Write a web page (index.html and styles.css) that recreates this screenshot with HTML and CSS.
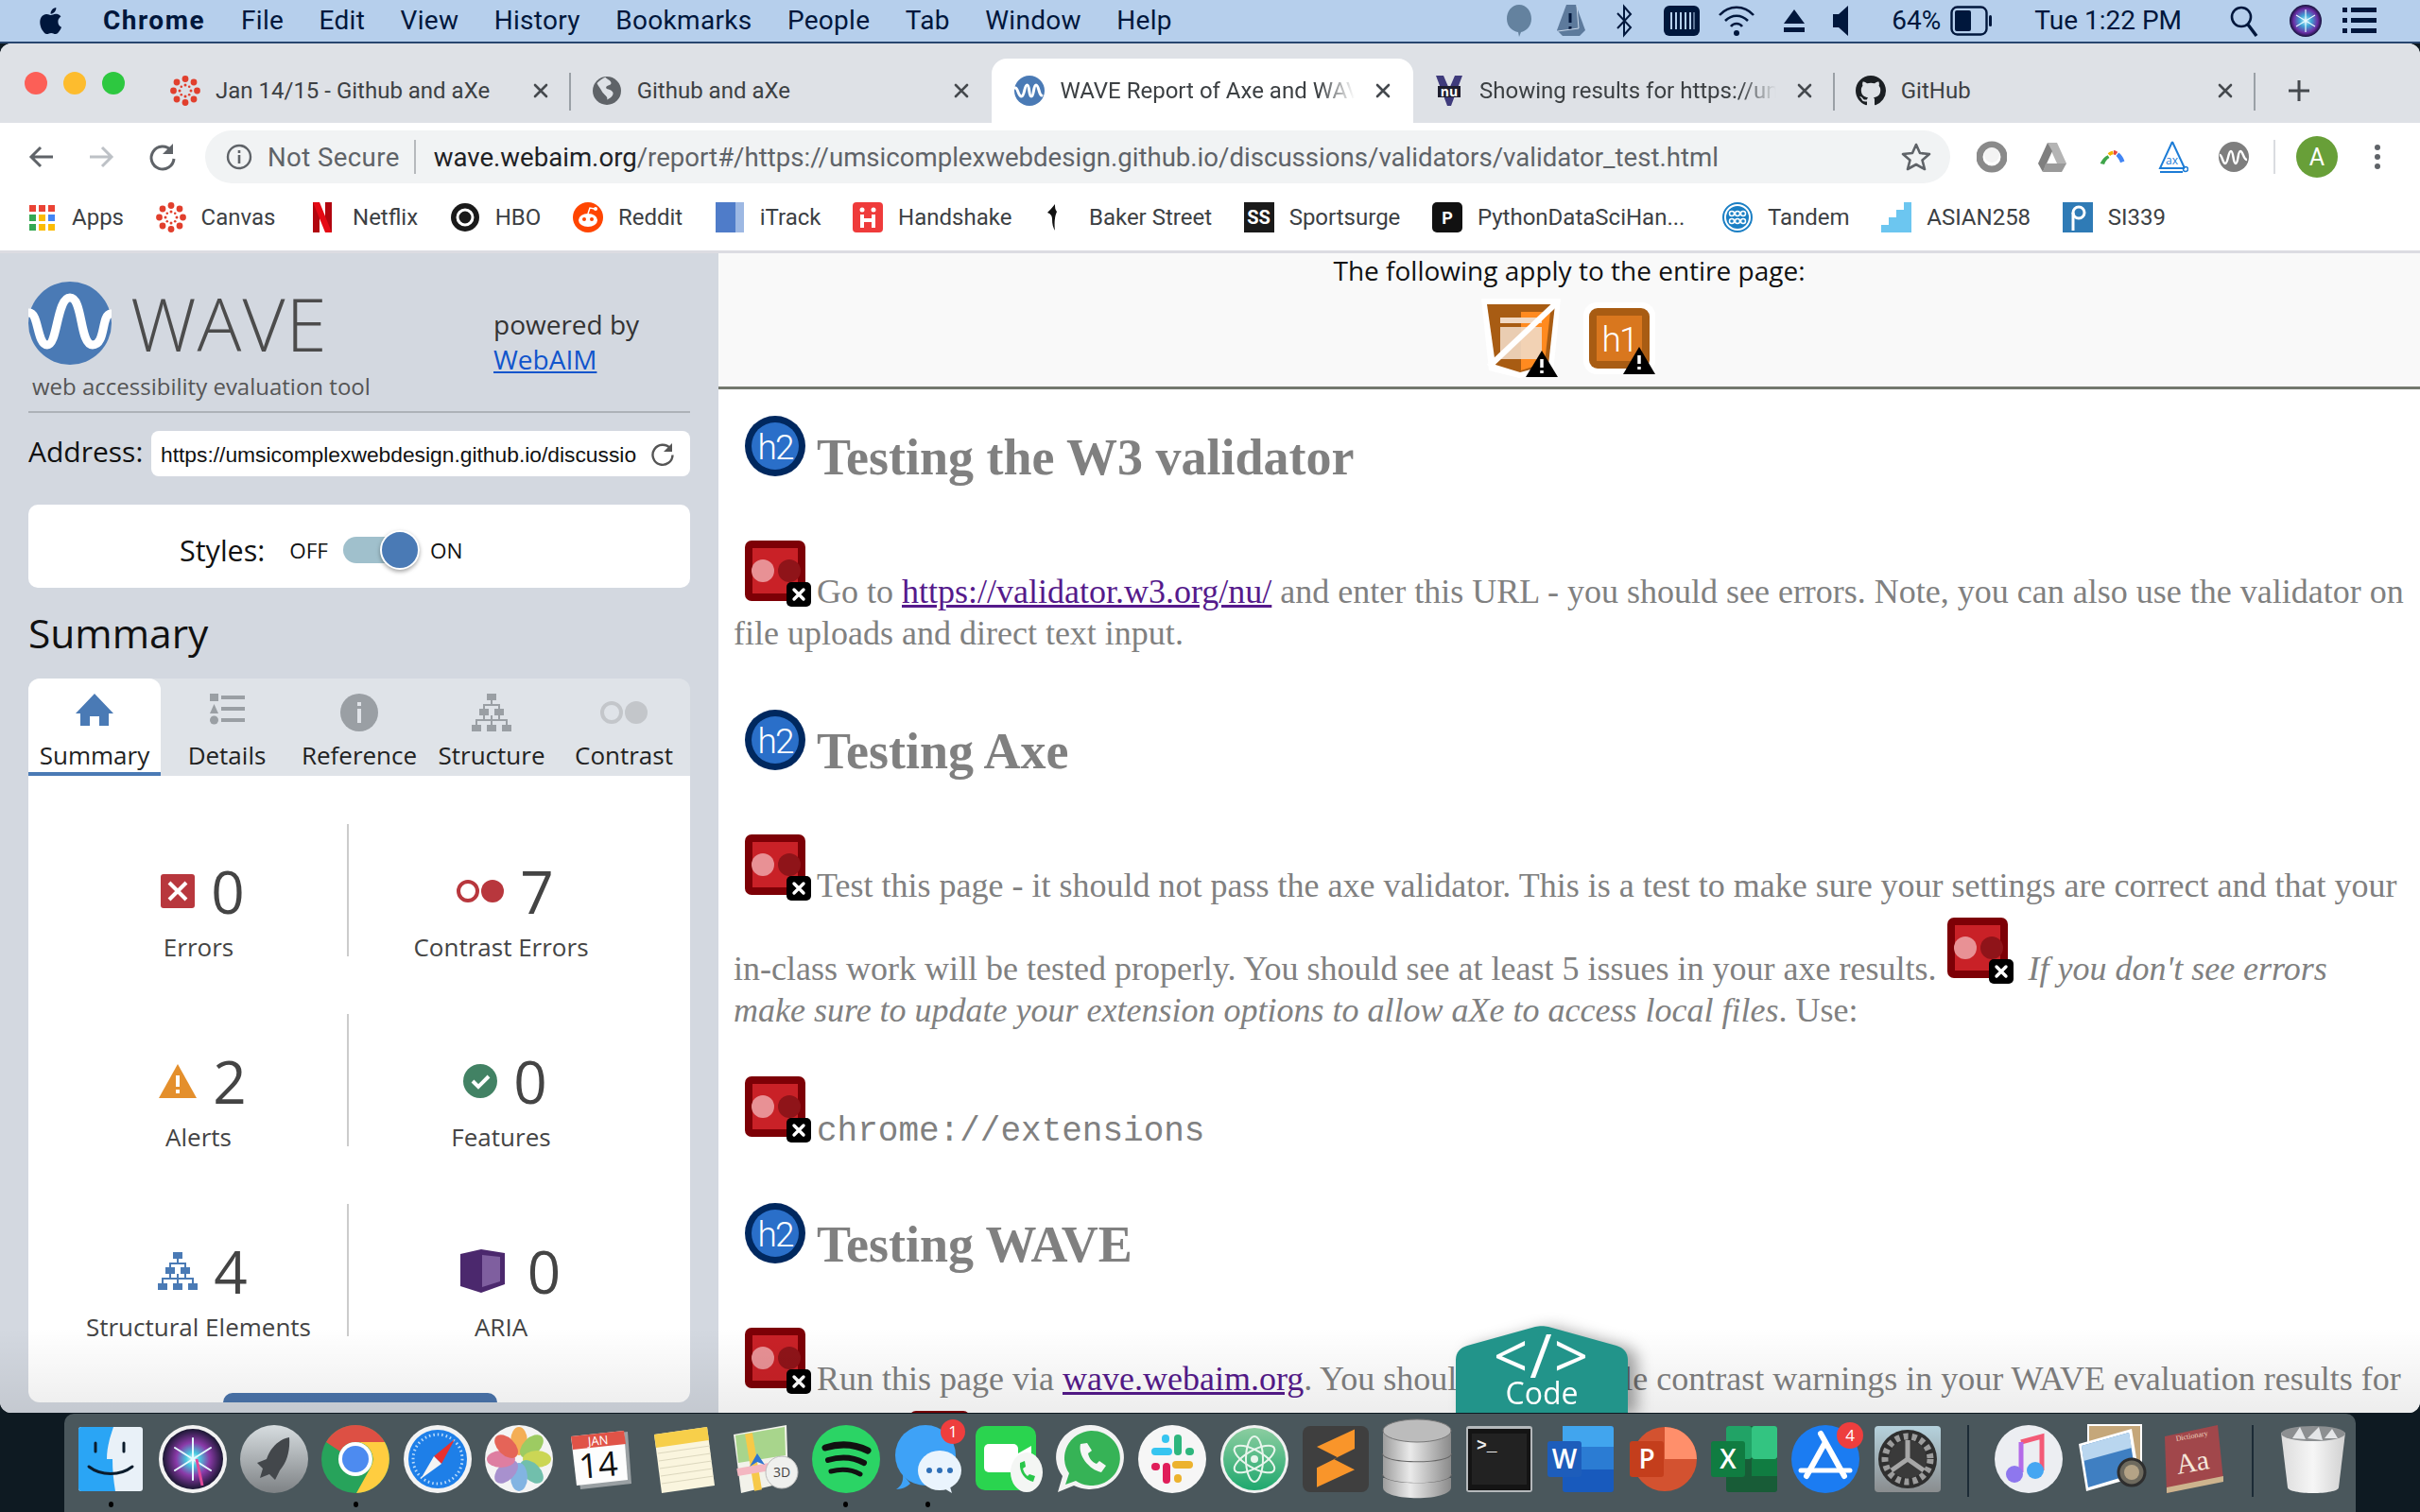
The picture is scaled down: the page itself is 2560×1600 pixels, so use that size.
FILE: index.html
```html
<!DOCTYPE html>
<html lang="en">
<head>
<meta charset="utf-8">
<title>WAVE Report of Axe and WAVE</title>
<link rel="stylesheet" href="styles.css">
</head>
<body>
<svg class="defs" aria-hidden="true">
  <symbol id="i-canvas" viewBox="0 0 32 32"><g fill="#e13f2d"><circle cx="16" cy="3.5" r="3.400"/><circle cx="16" cy="28.5" r="3.400"/><circle cx="3.5" cy="16" r="3.400"/><circle cx="28.500" cy="16" r="3.400"/><circle cx="7" cy="7" r="3.400"/><circle cx="25" cy="7" r="3.400"/><circle cx="7" cy="25" r="3.400"/><circle cx="25" cy="25" r="3.400"/><circle cx="16" cy="10" r="1.500"/><circle cx="16" cy="22" r="1.500"/><circle cx="10" cy="16" r="1.500"/><circle cx="22" cy="16" r="1.500"/><circle cx="11.800" cy="11.800" r="1.300"/><circle cx="20.200" cy="11.800" r="1.300"/><circle cx="11.800" cy="20.200" r="1.300"/><circle cx="20.200" cy="20.200" r="1.300"/></g></symbol>
  <symbol id="i-wave" viewBox="0 0 32 32"><circle cx="16" cy="16" r="16" fill="#4a7ab5"/><path d="M1 12c3 0 3 9 6.500 9s3-12 6-12 1.500 12 4.500 12 2-12 5-12 3 11 6 11" transform="translate(0 1)" fill="none" stroke="#fff" stroke-width="3" stroke-linecap="round"/></symbol>
  <symbol id="i-github" viewBox="0 0 16 16"><path fill="#1b1f23" d="M8 0C3.58 0 0 3.58 0 8c0 3.54 2.29 6.53 5.470 7.590.4.070.55-.17.55-.38 0-.19-.01-.82-.01-1.490-2.010.37-2.530-.49-2.690-.94-.09-.23-.48-.94-.82-1.130-.28-.15-.68-.52-.01-.53.63-.01 1.080.58 1.230.82.72 1.210 1.870.87 2.330.66.070-.52.28-.87.51-1.070-1.780-.2-3.640-.89-3.640-3.950 0-.87.31-1.590.82-2.150-.08-.2-.36-1.020.08-2.120 0 0 .67-.21 2.200.82.64-.18 1.320-.27 2-.27.68 0 1.360.09 2 .27 1.530-1.040 2.200-.82 2.200-.82.44 1.100.16 1.920.08 2.120.51.56.82 1.270.82 2.150 0 3.070-1.870 3.750-3.650 3.950.29.25.54.73.54 1.480 0 1.070-.01 1.930-.01 2.200 0 .21.15.46.55.38A8.013 8.013 0 0016 8c0-4.420-3.580-8-8-8z"/></symbol>
  <symbol id="i-contrast" viewBox="0 0 64 64"><rect width="64" height="64" rx="7" fill="#7d0006"/><rect x="8" y="8" width="48" height="48" fill="#c92127"/><ellipse cx="19" cy="32" rx="12" ry="12" fill="#e89195"/><ellipse cx="47" cy="32" rx="12" ry="12" fill="#8f1419"/></symbol>
  <symbol id="i-badge-x" viewBox="0 0 26 26"><rect width="26" height="26" rx="5" fill="#000"/><path d="M8 8l10 10M18 8L8 18" stroke="#fff" stroke-width="3.400" stroke-linecap="round"/></symbol>
  <symbol id="i-close" viewBox="0 0 20 20"><path d="M4 4l12 12M16 4L4 16" stroke="#45494e" stroke-width="2.600" stroke-linecap="round"/></symbol>
</svg>

<header class="menubar">
  <nav class="menu-left">
    <svg class="apple" viewBox="0 0 24 28"><path fill="#00173c" d="M17.500 14.800c0-3 2.500-4.500 2.600-4.600-1.400-2.100-3.600-2.400-4.400-2.400-1.900-.2-3.600 1.100-4.600 1.100-1 0-2.400-1.100-4-1-2 0-3.900 1.200-5 3-2.100 3.700-.5 9.200 1.500 12.200 1 1.500 2.200 3.100 3.800 3 1.500-.1 2.100-1 3.900-1 1.800 0 2.300 1 3.900 1 1.600 0 2.700-1.500 3.700-3 1.200-1.700 1.600-3.300 1.700-3.400-.1-.1-3.100-1.200-3.100-4.900zM14.500 5.900c.8-1 1.400-2.400 1.200-3.900-1.200.1-2.700.8-3.600 1.900-.8.9-1.500 2.400-1.300 3.800 1.400.1 2.800-.7 3.700-1.800z"/></svg>
    <span class="menu-item menu-app">Chrome</span>
    <span class="menu-item">File</span>
    <span class="menu-item">Edit</span>
    <span class="menu-item">View</span>
    <span class="menu-item">History</span>
    <span class="menu-item">Bookmarks</span>
    <span class="menu-item">People</span>
    <span class="menu-item">Tab</span>
    <span class="menu-item">Window</span>
    <span class="menu-item">Help</span>
  </nav>
  <div class="menu-right">
    <svg class="st st-balloon" viewBox="0 0 30 36"><path fill="#64829f" d="M15 1c8 0 13 7 13 15s-6 13-11 14l-2 5-1-5C8 29 2 24 2 16S7 1 15 1z"/></svg>
    <svg class="st st-drive" viewBox="0 0 32 36"><path fill="#5d7a9c" d="M11 1h10l10 27-6 6H7l-6-6z"/><path d="M15 10v10M15 24v3" stroke="#00173c" stroke-width="3"/><path d="M22 2l2 24-22 3" stroke="#c9d8ea" fill="none"/></svg>
    <svg class="st st-bt" viewBox="0 0 18 36"><path fill="none" stroke="#00173c" stroke-width="2" d="M2 10l14 15-7 8V3l7 8L2 26"/></svg>
    <svg class="st st-mem" viewBox="0 0 38 36"><rect y="2" width="38" height="32" rx="6" fill="#00173c"/><path d="M8 9v18M13 9v18M18 9v18M23 9v18M28 9v18" stroke="#b6cfec" stroke-width="2"/><path d="M32 9v18" stroke="#b6cfec" stroke-width="1"/></svg>
    <svg class="st st-wifi" viewBox="0 0 40 36"><g fill="none" stroke="#00173c" stroke-width="2.600"><path d="M2 12c10-11 26-11 36 0"/><path d="M8 18c7-7 17-7 24 0"/><path d="M14 24c3-4 9-4 12 0"/></g><circle cx="20" cy="31" r="3" fill="#00173c"/></svg>
    <svg class="st st-eject" viewBox="0 0 24 36"><path fill="#00173c" d="M12 6l11 15H1zM1 25h22v5H1z"/></svg>
    <svg class="st st-vol" viewBox="0 0 18 36"><path fill="#00173c" d="M1 11h6l10-9v32L7 25H1z"/></svg>
    <span class="menu-item st-pct">64%</span>
    <svg class="st st-batt" viewBox="0 0 44 36"><rect x="1.500" y="3.500" width="37" height="29" rx="6" fill="none" stroke="#00173c" stroke-width="2.400"/><rect x="5" y="7" width="17" height="22" rx="2" fill="#00173c"/><rect x="41" y="12" width="3" height="12" rx="1.500" fill="#00173c"/></svg>
    <span class="menu-item st-time">Tue 1:22 PM</span>
    <svg class="st st-search" viewBox="0 0 32 36"><circle cx="13" cy="14" r="10" fill="none" stroke="#00173c" stroke-width="2.600"/><path d="M20 22l9 12" stroke="#00173c" stroke-width="3.400"/></svg>
    <svg class="st st-siri" viewBox="0 0 34 36"><defs><radialGradient id="sg1"><stop offset="0" stop-color="#c8f4ff"/><stop offset=".35" stop-color="#3fa6d6"/><stop offset=".75" stop-color="#6b2fa6"/><stop offset="1" stop-color="#14123a"/></radialGradient></defs><circle cx="17" cy="18" r="17" fill="url(#sg1)"/><path d="M17 6v24M7 12l20 12M27 12L7 24" stroke="#e8fbff" stroke-width="1.200"/></svg>
    <svg class="st st-list" viewBox="0 0 38 36"><g fill="#00173c"><rect y="4" width="5" height="5"/><rect y="15" width="5" height="5"/><rect y="26" width="5" height="5"/><rect x="9" y="4" width="27" height="5"/><rect x="9" y="15" width="27" height="5"/><rect x="9" y="26" width="27" height="5"/></g></svg>
  </div>
</header>

<div class="window">
  <div class="tabstrip">
    <div class="traffic">
      <span class="light light-red"></span>
      <span class="light light-yellow"></span>
      <span class="light light-green"></span>
    </div>
    <div class="tab">
      <svg class="favicon"><use href="#i-canvas"/></svg>
      <span class="tab-title">Jan 14/15 - Github and aXe</span>
      <svg class="tab-close"><use href="#i-close"/></svg>
    </div>
    <div class="tab">
      <svg class="favicon" viewBox="0 0 32 32"><circle cx="16" cy="16" r="15" fill="#5f6368"/><path fill="#dee1e6" d="M14 2c3 3 7 4 7 7s-5 2-6 5 6 2 8 6-4 8-7 9c2-4-4-6-6-10S5 12 4 9c3-3 7-6 10-7z" transform="translate(2 0) scale(.88)"/></svg>
      <span class="tab-title">Github and aXe</span>
      <svg class="tab-close"><use href="#i-close"/></svg>
    </div>
    <div class="tab tab-active">
      <svg class="favicon"><use href="#i-wave"/></svg>
      <span class="tab-title tab-fade">WAVE Report of Axe and WAVE</span>
      <svg class="tab-close"><use href="#i-close"/></svg>
    </div>
    <div class="tab tab-after">
      <svg class="favicon" viewBox="0 0 32 32"><path fill="#3f3b7c" d="M2 0h8l6 14 6-14h8L18 32h-4z"/><rect x="4" y="11" width="24" height="12" fill="#1d1d2e"/><text x="16" y="21.500" class="nu-text">nu</text></svg>
      <span class="tab-title tab-fade">Showing results for https://umsicomplexwebdesign.github.io</span>
      <svg class="tab-close"><use href="#i-close"/></svg>
    </div>
    <div class="tab tab-last">
      <svg class="favicon"><use href="#i-github"/></svg>
      <span class="tab-title">GitHub</span>
      <svg class="tab-close"><use href="#i-close"/></svg>
    </div>
    <svg class="tab-new" viewBox="0 0 24 24"><path d="M12 1v22M1 12h22" stroke="#45494e" stroke-width="3"/></svg>
  </div>

  <div class="toolbar">
    <svg class="nav-btn" viewBox="0 0 32 32"><path d="M28 16H5M15 6L5 16l10 10" fill="none" stroke="#5f6368" stroke-width="3"/></svg>
    <svg class="nav-btn nav-forward" viewBox="0 0 32 32"><path d="M4 16h23M17 6l10 10-10 10" fill="none" stroke="#bdc1c6" stroke-width="3"/></svg>
    <svg class="nav-btn nav-reload" viewBox="0 0 32 32"><path d="M25 9a12 12 0 1 0 3 9" fill="none" stroke="#5f6368" stroke-width="3"/><path d="M27 2v11H16z" fill="#5f6368"/></svg>
    <div class="omnibox">
      <svg class="omni-info" viewBox="0 0 28 28"><circle cx="14" cy="14" r="12" fill="none" stroke="#5f6368" stroke-width="2.400"/><path d="M14 12v9M14 7v3" stroke="#5f6368" stroke-width="2.600"/></svg>
      <span class="omni-state">Not Secure</span>
      <span class="omni-sep"></span>
      <span class="omni-url"><b class="omni-host">wave.webaim.org</b>/report#/https://umsicomplexwebdesign.github.io/discussions/validators/validator_test.html</span>
      <svg class="omni-star" viewBox="0 0 32 32"><path d="M16 3l4 9 10 1-7.500 6.500L25 29l-9-5-9 5 2.500-9.500L2 13l10-1z" fill="none" stroke="#5f6368" stroke-width="2.600" stroke-linejoin="round"/></svg>
    </div>
    <div class="extensions">
      <svg class="ext" viewBox="0 0 32 36"><circle cx="16" cy="18" r="13" fill="none" stroke="#8a8a8a" stroke-width="7"/><circle cx="16" cy="16" r="8" fill="#f3f3f3"/></svg>
      <svg class="ext" viewBox="0 0 32 36"><path d="M11 3h10l10 22H21z" fill="#b4b4b4"/><path d="M11 3L1 25l5 9 10-22z" fill="#7f7f7f"/><path d="M9 25h22l-5 9H6z" fill="#9a9a9a"/></svg>
      <svg class="ext" viewBox="0 0 36 36"><path d="M3 26c2-5 5-8 9-10l2 3c-3 2-5 4-6 8z" fill="#3ea54a"/><path d="M12 14c2-2 4-3 6-3l1 4c-2 0-3 1-4 2z" fill="#f4b400"/><path d="M19 10c2 0 3 1 5 2l-3 4-2-1z" fill="#e8453c"/><path d="M25 13c3 2 5 5 7 10l-5 2c-1-3-3-6-5-8z" fill="#4285f4"/></svg>
      <svg class="ext" viewBox="0 0 32 36"><path d="M15 2L2 30h26" fill="none" stroke="#1c7cd6" stroke-width="2"/><path d="M15 2l13 28" fill="none" stroke="#1c7cd6" stroke-width="2"/><text x="14.500" y="26" class="ax-text">ax</text><circle cx="29" cy="31" r="2.500" fill="none" stroke="#1c7cd6" stroke-width="1.500"/><path d="M2 34h24" stroke="#1c7cd6" stroke-width="2"/></svg>
      <svg class="ext" viewBox="0 0 32 36"><circle cx="16" cy="18" r="16" fill="#7e7e7e"/><path d="M1 16c3 0 3 9 6 9s3-13 6-13 2 13 5 13 2-13 5-13 3 9 7 9" fill="none" stroke="#fff" stroke-width="2.400"/></svg>
    </div>
    <span class="toolbar-sep"></span>
    <span class="avatar">A</span>
    <svg class="kebab" viewBox="0 0 8 32"><circle cx="4" cy="6" r="3" fill="#5f6368"/><circle cx="4" cy="16" r="3" fill="#5f6368"/><circle cx="4" cy="26" r="3" fill="#5f6368"/></svg>
  </div>

  <div class="bookmarks">
    <a class="bm"><svg class="bm-icon" viewBox="0 0 32 32"><g><rect x="3" y="3" width="7" height="7" fill="#ea4335"/><rect x="13" y="3" width="7" height="7" fill="#ea4335"/><rect x="23" y="3" width="7" height="7" fill="#ea4335"/><rect x="3" y="13" width="7" height="7" fill="#34a853"/><rect x="13" y="13" width="7" height="7" fill="#fbbc05"/><rect x="23" y="13" width="7" height="7" fill="#4285f4"/><rect x="3" y="23" width="7" height="7" fill="#34a853"/><rect x="13" y="23" width="7" height="7" fill="#fbbc05"/><rect x="23" y="23" width="7" height="7" fill="#fbbc05"/></g></svg>Apps</a>
    <a class="bm"><svg class="bm-icon"><use href="#i-canvas"/></svg>Canvas</a>
    <a class="bm"><svg class="bm-icon" viewBox="0 0 32 32"><path fill="#b1060f" d="M6 0h7v32H6zM19 0h7v32h-7z"/><path fill="#e50914" d="M6 0h7l13 32h-7z"/></svg>Netflix</a>
    <a class="bm"><svg class="bm-icon" viewBox="0 0 32 32"><circle cx="16" cy="16" r="15" fill="#1a1a1a"/><circle cx="16" cy="16" r="8" fill="none" stroke="#fff" stroke-width="3"/></svg>HBO</a>
    <a class="bm"><svg class="bm-icon" viewBox="0 0 32 32"><circle cx="16" cy="16" r="16" fill="#ff4500"/><ellipse cx="16" cy="19" rx="10" ry="7" fill="#fff"/><circle cx="12" cy="18" r="2" fill="#ff4500"/><circle cx="20" cy="18" r="2" fill="#ff4500"/><path d="M16 12l2-6 5 1" fill="none" stroke="#fff" stroke-width="1.500"/><circle cx="24" cy="7" r="2" fill="#fff"/></svg>Reddit</a>
    <a class="bm"><svg class="bm-icon" viewBox="0 0 32 32"><rect x="1" width="30" height="32" fill="#4f7cc9"/><path d="M22 0h9v32h-9z" fill="#9db8e3"/></svg>iTrack</a>
    <a class="bm"><svg class="bm-icon" viewBox="0 0 32 32"><rect width="32" height="32" rx="4" fill="#ef3b3b"/><circle cx="10" cy="8" r="2.500" fill="#fff"/><circle cx="22" cy="8" r="2.500" fill="#fff"/><path d="M8 13h4v14H8zM20 13h4v14h-4zM12 17h8v4h-8z" fill="#fff"/></svg>Handshake</a>
    <a class="bm"><svg class="bm-icon" viewBox="0 0 32 32"><path d="M12 2c-3 4-6 7-8 9 3 1 5 3 5 7 0 5 1 9 3 12-1-9 0-16 2-20-2-2-2-5-2-8z" fill="#111"/></svg>Baker Street</a>
    <a class="bm"><span class="bm-ss">SS</span>Sportsurge</a>
    <a class="bm bm-long"><span class="bm-p">P</span>PythonDataSciHan...</a>
    <a class="bm"><svg class="bm-icon" viewBox="0 0 32 32"><circle cx="16" cy="16" r="15" fill="#fff" stroke="#1b7fc4" stroke-width="2"/><circle cx="16" cy="16" r="12" fill="#1b7fc4"/><g fill="none" stroke="#fff" stroke-width="1.500"><circle cx="10" cy="12" r="2.500"/><circle cx="16" cy="12" r="2.500"/><circle cx="22" cy="12" r="2.500"/><circle cx="10" cy="20" r="2.500"/><circle cx="16" cy="20" r="2.500"/><circle cx="22" cy="20" r="2.500"/></g></svg>Tandem</a>
    <a class="bm"><svg class="bm-icon" viewBox="0 0 32 32"><path fill="#6cc6f0" d="M24 0h8v32H0v-8h8v-8h8V8h8z"/></svg>ASIAN258</a>
    <a class="bm"><svg class="bm-icon" viewBox="0 0 32 32"><rect width="32" height="32" fill="#2f7bb6"/><circle cx="17" cy="11" r="6" fill="none" stroke="#fff" stroke-width="3"/><path d="M11 11v19" stroke="#fff" stroke-width="3"/></svg>SI339</a>
  </div>

  <main class="main">
    <aside class="sidebar">
      <div class="brand">
        <div class="brand-main">
          <div class="brand-logo">
            <svg class="brand-mark" viewBox="0 0 88 88"><circle cx="44" cy="44" r="44" fill="#4a7ab5"/><path d="M1 33c10 0 8 34 19 34s10-50 24-50 10 50 24 50 9-32 19-33" fill="none" stroke="#fff" stroke-width="9" stroke-linecap="round"/></svg>
            <span class="brand-word">WAVE</span>
          </div>
          <div class="brand-sub">web accessibility evaluation tool</div>
        </div>
        <div class="powered">powered by<br><a class="powered-link">WebAIM</a></div>
      </div>
      <div class="address">
        <label class="address-label">Address:</label>
        <div class="address-input">
          <span class="address-url">https://umsicomplexwebdesign.github.io/discussio</span>
          <svg class="address-reload" viewBox="0 0 26 26"><path d="M21 6.500a10.500 10.500 0 1 0 2.500 7" fill="none" stroke="#555" stroke-width="2.400"/><path d="M23 1v9h-9z" fill="#555"/></svg>
        </div>
      </div>
      <div class="styles-box">
        <span class="styles-label">Styles:</span>
        <span class="styles-off">OFF</span>
        <span class="toggle"><span class="toggle-knob"></span></span>
        <span class="styles-on">ON</span>
      </div>
      <h1 class="summary-title">Summary</h1>
      <div class="wave-tabs">
        <div class="wave-tab wave-tab-active">
          <svg class="wave-tab-icon" viewBox="0 0 42 40"><path fill="#4a7ab5" d="M21 0L1 21h5v13h10V24h10v10h10V21h5z"/></svg>
          <span>Summary</span>
        </div>
        <div class="wave-tab">
          <svg class="wave-tab-icon" viewBox="0 0 42 40"><g fill="#9a9fa4"><rect x="3" width="9" height="8"/><path d="M7.500 11L12 21H3z"/><circle cx="7.500" cy="28" r="4.500"/><rect x="15" y="2" width="25" height="4"/><rect x="15" y="14" width="25" height="4"/><rect x="15" y="26" width="25" height="4"/></g></svg>
          <span>Details</span>
        </div>
        <div class="wave-tab">
          <svg class="wave-tab-icon" viewBox="0 0 40 40"><circle cx="20" cy="20" r="20" fill="#9a9fa4"/><path d="M20 16v15M20 9v4" stroke="#e0e3e8" stroke-width="4"/></svg>
          <span>Reference</span>
        </div>
        <div class="wave-tab">
          <svg class="wave-tab-icon" viewBox="0 0 42 40"><g fill="#9a9fa4"><rect x="16" width="10" height="7"/><rect x="8" y="16" width="10" height="7"/><rect x="24" y="16" width="10" height="7"/><rect x="0" y="33" width="10" height="7"/><rect x="16" y="33" width="10" height="7"/><rect x="32" y="33" width="10" height="7"/></g><path d="M21 7v5M13 16v-4h16v4M5 33v-5h32v5M21 23v10M13 23v5M29 23v5" fill="none" stroke="#9a9fa4" stroke-width="2"/></svg>
          <span>Structure</span>
        </div>
        <div class="wave-tab">
          <svg class="wave-tab-icon wave-tab-contrast" viewBox="0 0 50 24"><circle cx="12" cy="12" r="10" fill="none" stroke="#c3c6ca" stroke-width="4"/><circle cx="38" cy="12" r="12" fill="#c3c6ca"/></svg>
          <span>Contrast</span>
        </div>
      </div>
      <section class="panel">
        <div class="stat">
          <div class="stat-top"><svg class="stat-icon" viewBox="0 0 36 36"><rect width="36" height="36" rx="3" fill="#b8373d"/><path d="M9 9l18 18M27 9L9 27" stroke="#fff" stroke-width="4"/></svg><span class="stat-num">0</span></div>
          <div class="stat-label">Errors</div>
        </div>
        <div class="stat">
          <div class="stat-top"><svg class="stat-icon stat-icon-wide" viewBox="0 0 50 26"><circle cx="12" cy="13" r="10" fill="none" stroke="#b8373d" stroke-width="4"/><circle cx="38" cy="13" r="12" fill="#b8373d"/></svg><span class="stat-num">7</span></div>
          <div class="stat-label">Contrast Errors</div>
        </div>
        <div class="stat">
          <div class="stat-top"><svg class="stat-icon stat-icon-tri" viewBox="0 0 40 36"><path d="M20 0l20 36H0z" fill="#e48f2c"/><path d="M20 12v12M20 27v4" stroke="#fff" stroke-width="4"/></svg><span class="stat-num">2</span></div>
          <div class="stat-label">Alerts</div>
        </div>
        <div class="stat">
          <div class="stat-top"><svg class="stat-icon" viewBox="0 0 36 36"><circle cx="18" cy="18" r="18" fill="#428264"/><path d="M10 18l6 6 11-11" fill="none" stroke="#fff" stroke-width="4"/></svg><span class="stat-num">0</span></div>
          <div class="stat-label">Features</div>
        </div>
        <div class="stat">
          <div class="stat-top"><svg class="stat-icon stat-icon-struct" viewBox="0 0 42 40"><g fill="#4a7ab5"><rect x="16" width="10" height="7"/><rect x="8" y="16" width="10" height="7"/><rect x="24" y="16" width="10" height="7"/><rect x="0" y="33" width="10" height="7"/><rect x="16" y="33" width="10" height="7"/><rect x="32" y="33" width="10" height="7"/></g><path d="M21 7v5M13 16v-4h16v4M5 33v-5h32v5M21 23v10M13 23v5M29 23v5" fill="none" stroke="#4a7ab5" stroke-width="2"/></svg><span class="stat-num">4</span></div>
          <div class="stat-label">Structural Elements</div>
        </div>
        <div class="stat">
          <div class="stat-top"><svg class="stat-icon stat-icon-aria" viewBox="0 0 47 46"><path d="M0 5l22-5 25 4v33l-25 9-22-7z" fill="#4b286d"/><path d="M23 6l19 2v26l-19 6z" fill="#7f5f9f"/></svg><span class="stat-num">0</span></div>
          <div class="stat-label">ARIA</div>
        </div>
        <span class="panel-button"></span>
      </section>
    </aside>

    <article class="report">
      <div class="page-alerts">
        <div class="page-alerts-title">The following apply to the entire page:</div>
        <div class="page-alerts-icons">
          <svg class="html5-icon" viewBox="0 0 84 84"><path d="M0 0h84l-8 78-36 6-32-8z" fill="#fff"/><path d="M6 6h72l-7 64-30 8-26-8z" fill="#a85c13"/><path d="M42 14h31l-6 54-25 8z" fill="#ff8a1f"/><rect x="20" y="20" width="44" height="6" fill="#f1d9c4"/><rect x="20" y="30" width="44" height="34" fill="#f1d9c4" opacity=".9"/><path d="M78 6L8 72" stroke="#fff" stroke-width="6"/><path d="M47 83l17-28 17 28z" fill="#000"/><path d="M64 64v9M64 76v3" stroke="#fff" stroke-width="3.500"/></svg>
          <svg class="h1-icon" viewBox="0 0 76 76"><rect width="76" height="76" rx="14" fill="#fff"/><rect x="6" y="6" width="64" height="64" rx="9" fill="#a85c13"/><rect x="14" y="14" width="48" height="48" fill="#d9771e"/><text x="38" y="52" class="h-text">h1</text><path d="M42 76l17-29 17 29z" fill="#000"/><path d="M59 56v9M59 68v3" stroke="#fff" stroke-width="3.500"/></svg>
        </div>
      </div>
      <div class="doc">
        <h2 class="doc-h"><svg class="wi-h" viewBox="0 0 64 64"><circle cx="32" cy="32" r="32" fill="#00285f"/><circle cx="32" cy="32" r="25" fill="#2a6fc9"/><text x="32" y="46" class="h-text">h2</text></svg>Testing the W3 validator</h2>
        <p class="doc-p"><svg class="wi"><use href="#i-contrast"/><use href="#i-badge-x" x="44" y="44" width="26" height="26"/></svg>Go to <a class="doc-link">https://validator.w3.org/nu/</a> and enter this URL - you should see errors. Note, you can also use the validator on file uploads and direct text input.</p>
        <h2 class="doc-h"><svg class="wi-h" viewBox="0 0 64 64"><circle cx="32" cy="32" r="32" fill="#00285f"/><circle cx="32" cy="32" r="25" fill="#2a6fc9"/><text x="32" y="46" class="h-text">h2</text></svg>Testing Axe</h2>
        <p class="doc-p"><svg class="wi"><use href="#i-contrast"/><use href="#i-badge-x" x="44" y="44" width="26" height="26"/></svg>Test this page - it should not pass the axe validator. This is a test to make sure your settings are correct and that your in-class work will be tested properly. You should see at least 5 issues in your axe results.<svg class="wi"><use href="#i-contrast"/><use href="#i-badge-x" x="44" y="44" width="26" height="26"/></svg> <em>If you don't see errors make sure to update your extension options to allow aXe to access local files</em>. Use:</p>
        <p class="doc-p doc-code"><svg class="wi wi-mono"><use href="#i-contrast"/><use href="#i-badge-x" x="44" y="44" width="26" height="26"/></svg><code>chrome://extensions</code></p>
        <h2 class="doc-h"><svg class="wi-h" viewBox="0 0 64 64"><circle cx="32" cy="32" r="32" fill="#00285f"/><circle cx="32" cy="32" r="25" fill="#2a6fc9"/><text x="32" y="46" class="h-text">h2</text></svg>Testing WAVE</h2>
        <p class="doc-p"><svg class="wi"><use href="#i-contrast"/><use href="#i-badge-x" x="44" y="44" width="26" height="26"/></svg>Run this page via <a class="doc-link">wave.webaim.org</a>. You should see multiple contrast warnings in your WAVE evaluation results for these pages.<svg class="wi"><use href="#i-contrast"/></svg></p>
      </div>
      <div class="code-tab">
        <svg class="code-shape" viewBox="0 0 182 92" preserveAspectRatio="none"><path fill="#22948a" d="M0 92V36c0-8 5-13 12-15L84 1c4-1 10-1 14 0l72 20c7 2 12 7 12 15v56z"/></svg>
        <span class="code-glyph">&lt;/&gt;</span>
        <span class="code-label">Code</span>
      </div>
    </article>
    <div class="fade"></div>
  </main>
</div>

<footer class="dock">
  <div class="dock-item">
    <svg class="dock-icon" viewBox="0 0 72 72"><rect x="2" y="2" width="68" height="68" rx="3" fill="#e9f1f8"/><path d="M2 5a3 3 0 0 1 3-3h34c-4 12-7 22-7 34h6c0 12 1 22 3 34H5a3 3 0 0 1-3-3z" fill="#2aa5f5"/><path d="M20 19v9M50 19v9" stroke="#0b1c2c" stroke-width="3" stroke-linecap="round"/><path d="M13 44c13 10 33 10 46 0" fill="none" stroke="#0b1c2c" stroke-width="3" stroke-linecap="round"/></svg>
    <span class="dock-dot"></span>
  </div>
  <div class="dock-item"><svg class="dock-icon" viewBox="0 0 72 72"><defs><radialGradient id="sg2"><stop offset="0" stop-color="#dffcff"/><stop offset=".22" stop-color="#46c8de"/><stop offset=".55" stop-color="#8a3aa8"/><stop offset="1" stop-color="#1a1732"/></radialGradient></defs><circle cx="36" cy="36" r="36" fill="#f2f2f2"/><circle cx="36" cy="36" r="32" fill="url(#sg2)"/><g stroke="#e4fbff" stroke-width="2" stroke-linecap="round"><path d="M36 14v44M17 24l38 24M55 24L17 48"/></g><path d="M40 36l6 28" stroke="#e0489a" stroke-width="3"/></svg></div>
  <div class="dock-item"><svg class="dock-icon" viewBox="0 0 72 72"><defs><linearGradient id="lg1" x1="0" y1="0" x2="0" y2="1"><stop offset="0" stop-color="#d7dde0"/><stop offset="1" stop-color="#7e8285"/></linearGradient></defs><circle cx="36" cy="36" r="36" fill="url(#lg1)"/><path d="M52 13c-11 2-20 11-24 23l-10 4 6 6-3 10 10-4 6 6 5-10c8-9 11-22 10-35z" fill="#43474b"/></svg></div>
  <div class="dock-item">
    <svg class="dock-icon" viewBox="0 0 72 72"><circle cx="36" cy="36" r="36" fill="#27a35b"/><path d="M36 0a36 36 0 0 1 31 18H36a18 18 0 0 0-16 10L5 18A36 36 0 0 1 36 0z" fill="#dd5044"/><path d="M67 18a36 36 0 0 1-30 54l15-27a18 18 0 0 0-16-27z" fill="#ffcd40"/><circle cx="36" cy="36" r="18" fill="#fff"/><circle cx="36" cy="36" r="14" fill="#4d8bf0"/></svg>
    <span class="dock-dot"></span>
  </div>
  <div class="dock-item"><svg class="dock-icon" viewBox="0 0 72 72"><circle cx="36" cy="36" r="36" fill="#f3f3f3"/><circle cx="36" cy="36" r="31" fill="#1e7fe8"/><circle cx="36" cy="36" r="26" fill="none" stroke="#bcdcfa" stroke-width="3" stroke-dasharray="1.500 3"/><path d="M54 15L32 33l8 8z" fill="#e8302f"/><path d="M18 57l22-16-8-8z" fill="#f4f4f4"/></svg></div>
  <div class="dock-item"><svg class="dock-icon" viewBox="0 0 72 72"><circle cx="36" cy="36" r="36" fill="#f4f4f4"/><g opacity=".85"><ellipse cx="36" cy="17" rx="9" ry="15" fill="#f4a23a"/><ellipse cx="36" cy="17" rx="9" ry="15" fill="#8ec449" transform="rotate(45 36 36)"/><ellipse cx="36" cy="17" rx="9" ry="15" fill="#c5d13a" transform="rotate(90 36 36)"/><ellipse cx="36" cy="17" rx="9" ry="15" fill="#5bb6a0" transform="rotate(135 36 36)"/><ellipse cx="36" cy="17" rx="9" ry="15" fill="#6fa9df" transform="rotate(180 36 36)"/><ellipse cx="36" cy="17" rx="9" ry="15" fill="#9b80c8" transform="rotate(225 36 36)"/><ellipse cx="36" cy="17" rx="9" ry="15" fill="#db6a93" transform="rotate(270 36 36)"/><ellipse cx="36" cy="17" rx="9" ry="15" fill="#e34b3d" transform="rotate(315 36 36)"/></g></svg></div>
  <div class="dock-item"><svg class="dock-icon" viewBox="0 0 72 72"><path d="M7 13l57-6 4 55-54 6z" fill="#9aa0a3"/><path d="M4 12l56-6 4 52-54 6z" fill="#fdfdfd"/><path d="M4 12l56-6 2 14-56 6z" fill="#e05347"/><text x="33" y="21" class="cal-mon" transform="rotate(-5 33 21)">JAN</text><text x="34" y="55" class="cal-day" transform="rotate(-5 34 55)">14</text></svg></div>
  <div class="dock-item"><svg class="dock-icon" viewBox="0 0 72 72"><path d="M6 10l56-8 8 62-56 8z" fill="#faf5de"/><path d="M6 10l56-8 2 14-56 8z" fill="#f7cf4a"/><g stroke="#dcd7be" stroke-width="1.200"><path d="M10 30l55-8M11 38l55-8M12 46l55-8M13 54l55-8M14 62l55-8"/></g></svg></div>
  <div class="dock-item"><svg class="dock-icon" viewBox="0 0 72 72"><path d="M4 10l56-10 2 60-50 12z" fill="#f2f2ea"/><path d="M6 11l52-9 1 30-50 8z" fill="#a8d58c"/><path d="M20 9l10 60" stroke="#f7c948" stroke-width="8"/><path d="M8 50l46-8" stroke="#f4b7c1" stroke-width="8"/><path d="M21 44l8-14 8 12-8-3z" fill="#2f74d0"/><circle cx="55" cy="50" r="17" fill="#eff0ee" stroke="#bbb"/><text x="55" y="55" class="maps-3d">3D</text></svg></div>
  <div class="dock-item">
    <svg class="dock-icon" viewBox="0 0 72 72"><circle cx="36" cy="36" r="36" fill="#2bd465"/><g fill="none" stroke="#111" stroke-linecap="round"><path d="M14 24c16-5 31-4 45 3" stroke-width="7"/><path d="M17 37c13-4 27-3 38 3" stroke-width="6"/><path d="M20 49c11-3 22-2 31 3" stroke-width="5"/></g></svg>
    <span class="dock-dot"></span>
  </div>
  <div class="dock-item">
    <svg class="dock-icon" viewBox="0 0 72 72"><circle cx="34" cy="32" r="32" fill="#3ea2f7"/><path d="M10 52c1 8-2 13-7 16 6 0 12-3 15-6z" fill="#3ea2f7"/><ellipse cx="49" cy="48" rx="23" ry="21" fill="#eaf4fd"/><path d="M52 66l10 6-3-10z" fill="#eaf4fd"/><circle cx="38" cy="48" r="3" fill="#2f6fb7"/><circle cx="49" cy="48" r="3" fill="#2f6fb7"/><circle cx="60" cy="48" r="3" fill="#2f6fb7"/><circle cx="63" cy="7" r="13" fill="#ee3e3e"/><text x="63" y="13" class="dock-badge">1</text></svg>
    <span class="dock-dot"></span>
  </div>
  <div class="dock-item"><svg class="dock-icon" viewBox="0 0 72 72"><rect x="1" y="1" width="64" height="68" rx="10" fill="#2ad44f"/><rect x="10" y="20" width="36" height="30" rx="5" fill="#fff"/><path d="M46 30l14-8v26l-14-8z" fill="#fff"/><ellipse cx="55" cy="50" rx="17" ry="21" fill="#f4f6f4"/><path d="M48 40c-1 10 5 18 14 20l2-6-6-2-2 2c-3-2-4-5-5-8l3-2-1-6z" fill="#29c64a"/></svg></div>
  <div class="dock-item"><svg class="dock-icon" viewBox="0 0 72 72"><path d="M36 0a36 34 0 1 1-18 64L1 71l5-17A36 34 0 0 1 36 0z" fill="#f3f3f3"/><path d="M36 6a30 29 0 1 1-16 53L9 63l4-12A30 29 0 0 1 36 6z" fill="#36b356"/><path d="M25 20c-3 12 9 27 22 30l5-7-7-5-3 3c-5-2-8-6-9-11l4-3-5-8z" fill="#f6f6f6"/></svg></div>
  <div class="dock-item"><svg class="dock-icon" viewBox="0 0 72 72"><circle cx="36" cy="36" r="36" fill="#f6f6f6"/><g stroke-width="8" stroke-linecap="round"><path d="M18 28h14" stroke="#36c5f0"/><path d="M29 14v1" stroke="#36c5f0"/><path d="M42 14v14" stroke="#2eb67d"/><path d="M54 28h1" stroke="#2eb67d"/><path d="M40 42h14" stroke="#ecb22e"/><path d="M42 56v1" stroke="#ecb22e"/><path d="M30 44v14" stroke="#e01e5a"/><path d="M18 44h1" stroke="#e01e5a"/></g></svg></div>
  <div class="dock-item"><svg class="dock-icon" viewBox="0 0 72 72"><defs><linearGradient id="lg2" x1="0" y1="0" x2="0" y2="1"><stop offset="0" stop-color="#8ccda0"/><stop offset="1" stop-color="#1fa86e"/></linearGradient></defs><circle cx="36" cy="36" r="36" fill="#f1f1f1"/><circle cx="36" cy="36" r="33" fill="url(#lg2)"/><g fill="none" stroke="#e8f5ec" stroke-width="2"><ellipse cx="36" cy="36" rx="9" ry="24"/><ellipse cx="36" cy="36" rx="9" ry="24" transform="rotate(60 36 36)"/><ellipse cx="36" cy="36" rx="9" ry="24" transform="rotate(-60 36 36)"/></g><circle cx="36" cy="36" r="4" fill="#e8f5ec"/></svg></div>
  <div class="dock-item"><svg class="dock-icon" viewBox="0 0 72 72"><rect x="1" y="1" width="70" height="70" rx="8" fill="#3f3f3f"/><path d="M56 8v22L34 42l22 12-40 20V52l22-12-22-12z" transform="translate(0 -3) scale(1 .93)" fill="#f9952a"/></svg></div>
  <div class="dock-item"><svg class="dock-icon dock-icon-tall" viewBox="0 0 72 84"><defs><linearGradient id="lg3"><stop offset="0" stop-color="#9d9d9d"/><stop offset=".4" stop-color="#eaeaea"/><stop offset="1" stop-color="#8a8a8a"/></linearGradient></defs><path d="M0 62h72v10c0 15-72 15-72 0z" fill="url(#lg3)"/><path d="M0 62c0 11 72 11 72 0" fill="none" stroke="#666" stroke-width="2" transform="translate(0 -4)"/><path d="M0 36h72v22c0 12-72 12-72 0z" fill="url(#lg3)"/><path d="M0 36c0 11 72 11 72 0" fill="none" stroke="#666" stroke-width="2"/><path d="M0 12h72v24c0 11-72 11-72 0z" fill="url(#lg3)"/><ellipse cx="36" cy="12" rx="36" ry="12" fill="#bcbcbc" stroke="#777"/></svg></div>
  <div class="dock-item"><svg class="dock-icon" viewBox="0 0 72 72"><rect x="1" y="1" width="70" height="70" rx="3" fill="#b5b9bc"/><rect x="3" y="4" width="66" height="65" fill="#141414"/><rect x="7" y="9" width="58" height="54" fill="#222"/><text x="12" y="27" class="term-text">&gt;_</text></svg></div>
  <div class="dock-item"><svg class="dock-icon" viewBox="0 0 72 72"><rect x="17" y="1" width="54" height="70" rx="3" fill="#185abd"/><path d="M17 1h51a3 3 0 0 1 3 3v19H17z" fill="#41a5ee"/><rect x="17" y="23" width="54" height="24" fill="#2b7cd3"/><rect x="1" y="17" width="36" height="38" rx="3" fill="#1d5dbb"/><text x="19" y="46" class="doc-letter">W</text></svg></div>
  <div class="dock-item"><svg class="dock-icon" viewBox="0 0 72 72"><circle cx="38" cy="36" r="34" fill="#d35230"/><path d="M38 2a34 34 0 0 1 34 34H38z" fill="#ff8f6b"/><rect x="1" y="17" width="36" height="38" rx="3" fill="#c43e1c"/><text x="19" y="46" class="doc-letter">P</text></svg></div>
  <div class="dock-item"><svg class="dock-icon" viewBox="0 0 72 72"><rect x="17" y="1" width="54" height="70" rx="3" fill="#185c37"/><rect x="17" y="1" width="27" height="35" rx="3" fill="#21a366"/><rect x="44" y="1" width="27" height="35" rx="3" fill="#33c481"/><rect x="44" y="36" width="27" height="18" fill="#107c41"/><rect x="1" y="17" width="36" height="38" rx="3" fill="#107c41"/><text x="19" y="46" class="doc-letter">X</text></svg></div>
  <div class="dock-item"><svg class="dock-icon" viewBox="0 0 72 72"><circle cx="36" cy="36" r="36" fill="#1b7cf2"/><path d="M16 54L36 18M36 18l-5-9M36 18l20 36" stroke="#fff" stroke-width="6" stroke-linecap="round"/><path d="M10 48h52" stroke="#fff" stroke-width="5" stroke-linecap="round"/><circle cx="62" cy="11" r="14" fill="#ee3e3e"/><text x="62" y="17" class="dock-badge">4</text></svg></div>
  <div class="dock-item"><svg class="dock-icon" viewBox="0 0 72 72"><defs><linearGradient id="lg4" x1="0" y1="0" x2="0" y2="1"><stop offset="0" stop-color="#b5d2dd"/><stop offset="1" stop-color="#8a8d8f"/></linearGradient></defs><rect x="1" y="1" width="70" height="70" rx="4" fill="url(#lg4)"/><circle cx="36" cy="36" r="31" fill="#2f2f2f"/><circle cx="36" cy="36" r="24" fill="none" stroke="#9c9c9c" stroke-width="7" stroke-dasharray="5 4"/><circle cx="36" cy="36" r="20" fill="#3a3a3a"/><path d="M36 36V16M36 36L19 48M36 36l17 12" stroke="#a7a7a7" stroke-width="5"/></svg></div>
  <span class="dock-sep"></span>
  <div class="dock-item"><svg class="dock-icon" viewBox="0 0 72 72"><circle cx="36" cy="36" r="36" fill="#eceef2"/><path d="M28 18l22-6v36" fill="none" stroke="#f35a76" stroke-width="5"/><path d="M28 18v32" stroke="#b46ae8" stroke-width="5"/><circle cx="21" cy="52" r="9" fill="#8e77ee"/><circle cx="43" cy="48" r="9" fill="#45a6f2"/></svg></div>
  <div class="dock-item"><svg class="dock-icon" viewBox="0 0 72 72"><rect x="12" y="0" width="56" height="40" fill="#c5a77a" stroke="#fff" stroke-width="2"/><path d="M2 20l56-16 8 50-56 16z" fill="#fff"/><path d="M5 22l50-14 7 43-50 15z" fill="#3f7fc2"/><path d="M5 22l50-14 3 16-51 14z" fill="#b9d6ef"/><circle cx="58" cy="50" r="14" fill="#6e6a5e" stroke="#2e2e2e" stroke-width="3"/><circle cx="58" cy="50" r="8" fill="#b4a386"/></svg></div>
  <div class="dock-item"><svg class="dock-icon" viewBox="0 0 72 72"><path d="M7 12l56-12 6 58-60 14z" fill="#a1474b"/><path d="M9 66l60-12v6L9 72z" fill="#cdb48e"/><text x="36" y="14" class="dict-small" transform="rotate(-10 36 14)">Dictionary</text><text x="38" y="49" class="dict-big" transform="rotate(-10 38 49)">Aa</text></svg></div>
  <span class="dock-sep"></span>
  <div class="dock-item"><svg class="dock-icon" viewBox="0 0 72 72"><defs><linearGradient id="lg5"><stop offset="0" stop-color="#dcdcdc"/><stop offset=".5" stop-color="#f6f6f6"/><stop offset="1" stop-color="#d0d0d0"/></linearGradient></defs><path d="M2 8h68l-7 58c-1 8-53 8-54 0z" fill="url(#lg5)"/><ellipse cx="36" cy="9" rx="34" ry="8" fill="#8c8f91"/><path d="M14 14l8-12 6 13zM30 14l12-12 4 14zM48 14l8-10 6 10z" fill="#e4e6e8"/></svg></div>
</footer>
</body>
</html>
```

FILE: styles.css
```css
* { box-sizing: border-box; }
html, body { margin: 0; padding: 0; }
body {
  width: 2560px;
  height: 1600px;
  overflow: hidden;
  background: #0e1a22;
  display: flex;
  flex-direction: column;
  font-family: "Open Sans", "Liberation Sans", sans-serif;
}
svg { display: block; flex: none; }
svg text { font-family: "Open Sans", "Liberation Sans", sans-serif; }
.defs { position: absolute; width: 0; height: 0; }

/* mac menu bar */
.menubar {
  height: 46px;
  flex: none;
  background: #b6cfec;
  border-bottom: 2px solid #28466f;
  display: flex;
  align-items: center;
  justify-content: space-between;
  padding: 0 44px 0 41px;
  color: #00173c;
}
.menu-left, .menu-right { display: flex; align-items: center; }
.apple { width: 28px; height: 34px; margin-right: 40px; }
.menu-item { font-family: Roboto, "Liberation Sans", sans-serif; font-size: 28px; line-height: 44px; white-space: nowrap; margin-right: 37.4px; letter-spacing: .3px; }
.menu-app { font-weight: 700; letter-spacing: 1.5px; margin-right: 38px; }
.menu-right .menu-item { margin-right: 0; letter-spacing: 0; }
.st { height: 36px; }
.st-balloon { width: 30px; }
.st-drive { width: 32px; margin-left: 24px; }
.st-bt { width: 18px; margin-left: 31px; }
.st-mem { width: 38px; margin-left: 33px; }
.st-wifi { width: 40px; margin-left: 19px; }
.st-eject { width: 24px; margin-left: 29px; }
.st-vol { width: 18px; margin-left: 28px; }
.st-pct { margin-left: 45px; }
.st-batt { width: 44px; margin-left: 10px; }
.st-time { margin-left: 45px; }
.st-search { width: 32px; margin-left: 50px; }
.st-siri { width: 34px; margin-left: 32px; }
.st-list { width: 38px; margin-left: 22px; }

/* chrome window */
.window {
  height: 1449px;
  flex: none;
  display: flex;
  flex-direction: column;
  border-radius: 12px;
  overflow: hidden;
  background: #fff;
}
.tabstrip {
  height: 84px;
  flex: none;
  background: #dee1e6;
  display: flex;
  align-items: flex-end;
}
.traffic { width: 158px; height: 84px; flex: none; display: flex; align-items: center; gap: 17px; padding: 0 0 0 26px; }
.light { width: 24px; height: 24px; border-radius: 50%; }
.light-red { background: #fc5f57; }
.light-yellow { background: #fdbc2e; }
.light-green { background: #2dc840; }
.tab {
  width: 445.7px;
  height: 68px;
  flex: none;
  display: flex;
  align-items: center;
  padding: 0 22px 0 22px;
  position: relative;
  color: #3c4043;
  font-family: Roboto, "Liberation Sans", sans-serif;
  font-size: 24px;
}
.tab::after {
  content: "";
  position: absolute;
  right: 0;
  top: 15px;
  height: 40px;
  width: 2px;
  background: #9aa0a6;
}
.tab-active {
  background: #fff;
  border-radius: 16px 16px 0 0;
  padding-left: 24px;
}
.tab-active::after { display: none; }
.tab:nth-child(3)::after { display: none; }
.favicon { width: 32px; height: 32px; margin-right: 16px; }
.tab-title { flex: 1; white-space: nowrap; overflow: hidden; }
.tab-fade {
  margin-right: 12px;
  -webkit-mask-image: linear-gradient(90deg, #000 88%, transparent);
  mask-image: linear-gradient(90deg, #000 88%, transparent);
}
.tab-close { width: 20px; height: 20px; margin-left: 8px; }
.tab-new { width: 24px; height: 24px; margin: 0 0 22px 34px; }
.nu-text { fill: #fff; font-size: 14px; text-anchor: middle; font-weight: 700; }

.toolbar {
  height: 75px;
  flex: none;
  display: flex;
  align-items: center;
  padding: 0 0 3px 28px;
  background: #fff;
}
.nav-btn { width: 32px; height: 32px; }
.nav-forward { margin-left: 31px; }
.nav-reload { margin-left: 33px; }
.omnibox {
  width: 1846px;
  height: 56px;
  margin-left: 29px;
  flex: none;
  border-radius: 28px;
  background: #f1f3f4;
  display: flex;
  align-items: center;
  padding: 0 20px 0 22px;
  font-family: Roboto, "Liberation Sans", sans-serif;
  font-size: 27.6px;
  color: #5f6368;
}
.omni-info { width: 28px; height: 28px; }
.omni-state { margin-left: 16px; white-space: nowrap; letter-spacing: .4px; }
.omni-sep { width: 2px; height: 36px; background: #b6b9bc; margin: 0 19px 0 15px; }
.omni-url { flex: 1; white-space: nowrap; overflow: hidden; }
.omni-host { font-weight: 400; color: #202124; }
.omni-star { width: 32px; height: 32px; }
.extensions { display: flex; align-items: center; gap: 32px; margin-left: 28px; }
.ext { width: 32px; height: 36px; }
.toolbar-sep { width: 2px; height: 36px; background: #dadce0; margin: 0 22px 0 26px; }
.avatar {
  width: 44px; height: 44px; border-radius: 50%;
  background: #689f38; color: #fff;
  display: flex; align-items: center; justify-content: center;
  font-family: Roboto, "Liberation Sans", sans-serif; font-size: 25px;
}
.kebab { width: 8px; height: 32px; margin-left: 38px; }
.ax-text { font-size: 12px; fill: #1c7cd6; text-anchor: middle; }

.bookmarks {
  height: 60px;
  flex: none;
  display: flex;
  align-items: center;
  gap: 33.6px;
  padding: 0 0 10px 28px;
  background: #fff;
  font-family: Roboto, "Liberation Sans", sans-serif;
  font-size: 24px;
  color: #3c4043;
}
.bm { display: flex; align-items: center; gap: 16px; white-space: nowrap; }
.bm-long { margin-right: 6px; }
.bm-icon { width: 32px; height: 32px; flex: none; }
.bm-ss { width: 32px; height: 32px; background: #1a1a1a; color: #fff; font-weight: 700; font-size: 20px; display: flex; align-items: center; justify-content: center; }
.bm-p { width: 32px; height: 32px; background: #111; color: #fff; border-radius: 5px; font-weight: 700; font-size: 18px; display: flex; align-items: center; justify-content: center; }

.main {
  flex: 1;
  min-height: 0;
  display: flex;
  position: relative;
  border-top: 3px solid #dcdce2;
}
.fade {
  position: absolute;
  left: 0; right: 0; bottom: 0;
  height: 90px;
  background: linear-gradient(180deg, rgba(0,0,0,0), rgba(0,0,0,.07));
  pointer-events: none;
}

/* WAVE sidebar */
.sidebar {
  width: 760px;
  flex: none;
  background: #d3d8e0;
  padding: 30px 30px 0;
  color: #111;
}
.brand {
  height: 139px;
  display: flex;
  border-bottom: 2px solid #adb2b8;
}
.brand-main { width: 492px; }
.brand-logo { display: flex; align-items: center; height: 88px; }
.brand-mark { width: 88px; height: 88px; margin-right: 20px; }
.brand-word { font-size: 78px; font-weight: 300; color: #4c4c4c; line-height: 88px; letter-spacing: 1px; }
.brand-sub { font-size: 24px; color: #555; padding-left: 4px; line-height: 40px; margin-top: 3px; white-space: nowrap; }
.powered { font-size: 28px; line-height: 37px; color: #333; padding-top: 27px; }
.powered-link { color: #1155cc; text-decoration: underline; }
.address { display: flex; align-items: center; margin-top: 19px; height: 48px; }
.address-label { width: 130px; font-size: 30px; flex: none; padding-bottom: 6px; }
.address-input {
  flex: 1; height: 48px; background: #fff; border-radius: 8px;
  display: flex; align-items: center; justify-content: space-between;
  padding: 2px 16px 0 10px;
  font-family: "Liberation Sans", sans-serif; font-size: 22.8px; color: #111;
}
.address-url { white-space: nowrap; overflow: hidden; }
.address-reload { width: 26px; height: 26px; }
.styles-box {
  margin-top: 30px; height: 88px; background: #fff; border-radius: 10px;
  display: flex; align-items: center; padding: 8px 0 0 160px;
}
.styles-label { font-size: 30.5px; margin-right: 26px; }
.styles-off, .styles-on { font-size: 22.5px; }
.toggle { width: 81px; height: 28px; background: #a0c0cc; border-radius: 14px; margin: 0 11px 0 16px; position: relative; }
.toggle-knob {
  position: absolute; right: 0; top: -7px; width: 42px; height: 42px; border-radius: 50%;
  background: #4a7ab5; border: 2px solid #fff; box-shadow: 0 2px 4px rgba(0,0,0,.35);
}
.summary-title { margin: 0; height: 96px; display: flex; align-items: center; font-size: 42.5px; font-weight: 400; padding-bottom: 2px; }
.wave-tabs {
  height: 103px; display: flex; background: #dfe3e8; border-radius: 12px 12px 0 0;
}
.wave-tab {
  width: 140px; display: flex; flex-direction: column; align-items: center;
  padding-top: 16px; font-size: 26px; color: #222; border-radius: 12px 12px 0 0;
}
.wave-tab span { line-height: 36px; margin-top: 7px; white-space: nowrap; }
.wave-tab-active { background: #fff; border-bottom: 4px solid #4a7ab5; border-radius: 12px 12px 0 0; }
.wave-tab-icon { height: 40px; width: 42px; }
.wave-tab-contrast { width: 50px; }
.panel {
  height: 663px;
  background: #fff;
  border-radius: 0 0 12px 12px;
  padding: 51px 37px 0 23px;
  display: grid;
  grid-template-columns: 316px 322px;
  grid-auto-rows: 140px;
  row-gap: 61px;
  position: relative;
  overflow: hidden;
}
.stat { display: flex; flex-direction: column; align-items: center; padding-top: 35px; }
.stat:nth-child(odd) { border-right: 2px solid #ccc; }
.stat-top { display: flex; align-items: center; gap: 17px; height: 72px; padding-left: 9px; }
.stat-icon { width: 36px; height: 36px; }
.stat-icon-wide { width: 50px; height: 26px; }
.stat-icon-tri { width: 40px; height: 36px; }
.stat-icon-struct { width: 42px; height: 40px; }
.stat-icon-aria { width: 47px; height: 46px; margin: 0 7px 0 11px; }
.stat-num { font-size: 62px; line-height: 72px; color: #444; }
.stat-label { font-size: 26px; line-height: 36px; color: #444; margin-top: 5px; white-space: nowrap; }
.panel-button {
  position: absolute; left: 206px; bottom: 0; width: 290px; height: 10px;
  background: #4a74ab; border-radius: 10px 10px 0 0;
}

/* report pane */
.report { flex: 1; min-width: 0; position: relative; overflow: hidden; background: #fff; }
.page-alerts {
  height: 144px;
  background: #f9f9f9;
  border-bottom: 3px solid #73786e;
  text-align: center;
}
.page-alerts-title { font-size: 28px; line-height: 36px; color: #111; height: 45px; }
.page-alerts-icons { display: flex; justify-content: center; align-items: flex-start; gap: 24px; padding-right: 2px; }
.html5-icon { width: 84px; height: 84px; margin-top: 3px; }
.h1-icon { width: 76px; height: 76px; margin-top: 7px; }
.h-text { font-family: Roboto, "Open Sans", sans-serif; font-size: 37px; font-weight: 300; letter-spacing: -2px; fill: #fff; text-anchor: middle; }

.doc { padding: 5px 17px 0 16px; font-family: "Liberation Serif", "Times New Roman", serif; font-size: 36px; line-height: 44px; color: #808080; }
.doc-h { font-size: 54px; line-height: 66px; font-weight: 700; margin: 0 0 43px; padding-top: 23px; }
.doc-p { margin: 0 0 36px; }
.doc-code { margin-bottom: 30px; }
.doc-link { color: #551a8b; text-decoration: underline; }
.wi, .wi-h {
  display: inline-block;
  width: 64px; height: 64px;
  overflow: visible;
}
.wi { margin: 12px 12px 0; vertical-align: 2px; }
.wi-mono { vertical-align: 4px; }
.wi-h { margin: 0 12px; vertical-align: -2px; }
code { font-family: "Liberation Mono", "Courier New", monospace; font-size: 36px; }

.code-tab {
  position: absolute;
  left: 780px;
  bottom: 0;
  width: 182px;
  height: 92px;
  z-index: 2;
  display: flex;
  flex-direction: column;
  align-items: center;
  color: #fff;
  filter: drop-shadow(10px 2px 8px rgba(0,0,0,.35));
}
.code-shape { position: absolute; inset: 0; width: 100%; height: 100%; }
.code-glyph { position: relative; font-size: 64px; line-height: 58px; letter-spacing: 2px; margin-top: 2px; }
.code-label { position: relative; font-size: 32px; line-height: 36px; margin-top: -7px; }

/* mac dock */
.dock {
  flex: 1;
  margin: 1px 68px 0;
  background: #4a575c;
  border-radius: 10px 10px 0 0;
  display: flex;
  padding: 12px 0 0 6px;
}
.dock-item { width: 86.4px; flex: none; display: flex; flex-direction: column; align-items: center; position: relative; }
.dock-icon { width: 72px; height: 72px; overflow: visible; }
.dock-icon-tall { height: 84px; margin-top: -6px; }
.dock-dot { width: 5px; height: 6px; background: #000; border-radius: 50%; margin-top: 9px; }
.dock-sep { width: 2px; height: 76px; background: #1c2b36; margin: 0 20px; flex: none; }
.dock-badge { font-size: 17px; fill: #fff; text-anchor: middle; }
.cal-mon { font-size: 13px; fill: #fff; text-anchor: middle; }
.cal-day { font-size: 36px; fill: #111; text-anchor: middle; }
.maps-3d { font-size: 14px; fill: #444; text-anchor: middle; }
.term-text { font-size: 18px; font-weight: 700; fill: #eee; font-family: "Liberation Mono", monospace; }
.doc-letter { font-size: 28px; fill: #fff; text-anchor: middle; font-weight: 600; }
.dict-small { font-size: 8px; fill: #f0d8c0; text-anchor: middle; font-family: "Liberation Serif", serif; }
.dict-big { font-size: 30px; fill: #f5e6da; text-anchor: middle; font-family: "Liberation Serif", serif; }
```
